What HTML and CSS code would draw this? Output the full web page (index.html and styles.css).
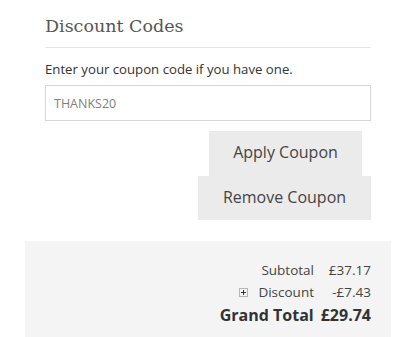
FILE: index.html
```html
<!DOCTYPE html>
<html>
<head>
<meta charset="utf-8">
<link rel="stylesheet" href="styles.css">
</head>
<body>
<div class="discount">
  <h2 class="title">Discount Codes</h2>
  <p class="hint">Enter your coupon code if you have one.</p>
  <input class="code" type="text" value="THANKS20">
  <div class="actions">
    <button class="btn apply">Apply Coupon</button>
    <button class="btn remove">Remove Coupon</button>
  </div>
</div>
<div class="totals">
  <div class="row"><span class="label">Subtotal</span><span class="val">£37.17</span></div>
  <div class="row"><span class="label"><svg class="exp" width="9" height="9" viewBox="0 0 9 9"><rect x="0.5" y="0.5" width="8" height="8" fill="none" stroke="#777" stroke-width="1" stroke-dasharray="1 1"/><path d="M4.5 2v5M2 4.5h5" stroke="#333" stroke-width="1"/></svg>Discount</span><span class="val">-£7.43</span></div>
  <div class="row grand"><span class="label">Grand Total</span><span class="val">£29.74</span></div>
</div>
</body>
</html>
```

FILE: styles.css
```css
html, body {
  margin: 0;
  padding: 0;
  background: #fff;
}
body {
  font-family: "Open Sans", sans-serif;
  color: #333;
}
.discount {
  margin-left: 45px;
  width: 326px;
  padding-top: 14px;
}
.title {
  margin: 0;
  font-family: "DejaVu Serif", serif;
  font-weight: normal;
  font-size: 17.5px;
  line-height: 24px;
  color: #555;
  padding-bottom: 9px;
  border-bottom: 1px solid #e5e5e5;
}
.hint {
  margin: 11px 0 0;
  font-size: 13.2px;
  line-height: 20px;
  color: #333;
}
.code {
  display: block;
  box-sizing: border-box;
  width: 326px;
  height: 36px;
  margin-top: 6px;
  border: 1px solid #d6d6d6;
  padding: 0 8px;
  font-family: "Open Sans", sans-serif;
  font-size: 12.5px;
  color: #808080;
  outline: none;
}
.actions {
  display: flex;
  flex-direction: column;
  align-items: flex-end;
  margin-top: 10px;
}
.btn {
  border: none;
  background: #ebebeb;
  font-family: "Open Sans", sans-serif;
  font-size: 16px;
  color: #444;
  padding: 0 0 3px;
}
.apply {
  width: 153px;
  height: 45px;
  margin-right: 9px;
}
.remove {
  width: 173px;
  height: 44px;
  padding-bottom: 2px;
}
.totals {
  margin: 21px 0 0 25px;
  width: 366px;
  height: 97px;
  background: #f4f4f4;
  box-sizing: border-box;
  padding: 18px 20px 0 0;
}
.row {
  display: flex;
  justify-content: flex-end;
  gap: 14px;
  font-size: 13.5px;
  line-height: 22px;
  color: #444;
}
.label {
  display: flex;
  align-items: center;
}
.exp {
  margin-right: 10px;
}
.val {
  min-width: 43px;
  text-align: right;
}
.grand {
  font-weight: bold;
  font-size: 16px;
  line-height: 25px;
  gap: 7px;
  color: #333;
}
.grand .val {
  min-width: 50px;
}
```
